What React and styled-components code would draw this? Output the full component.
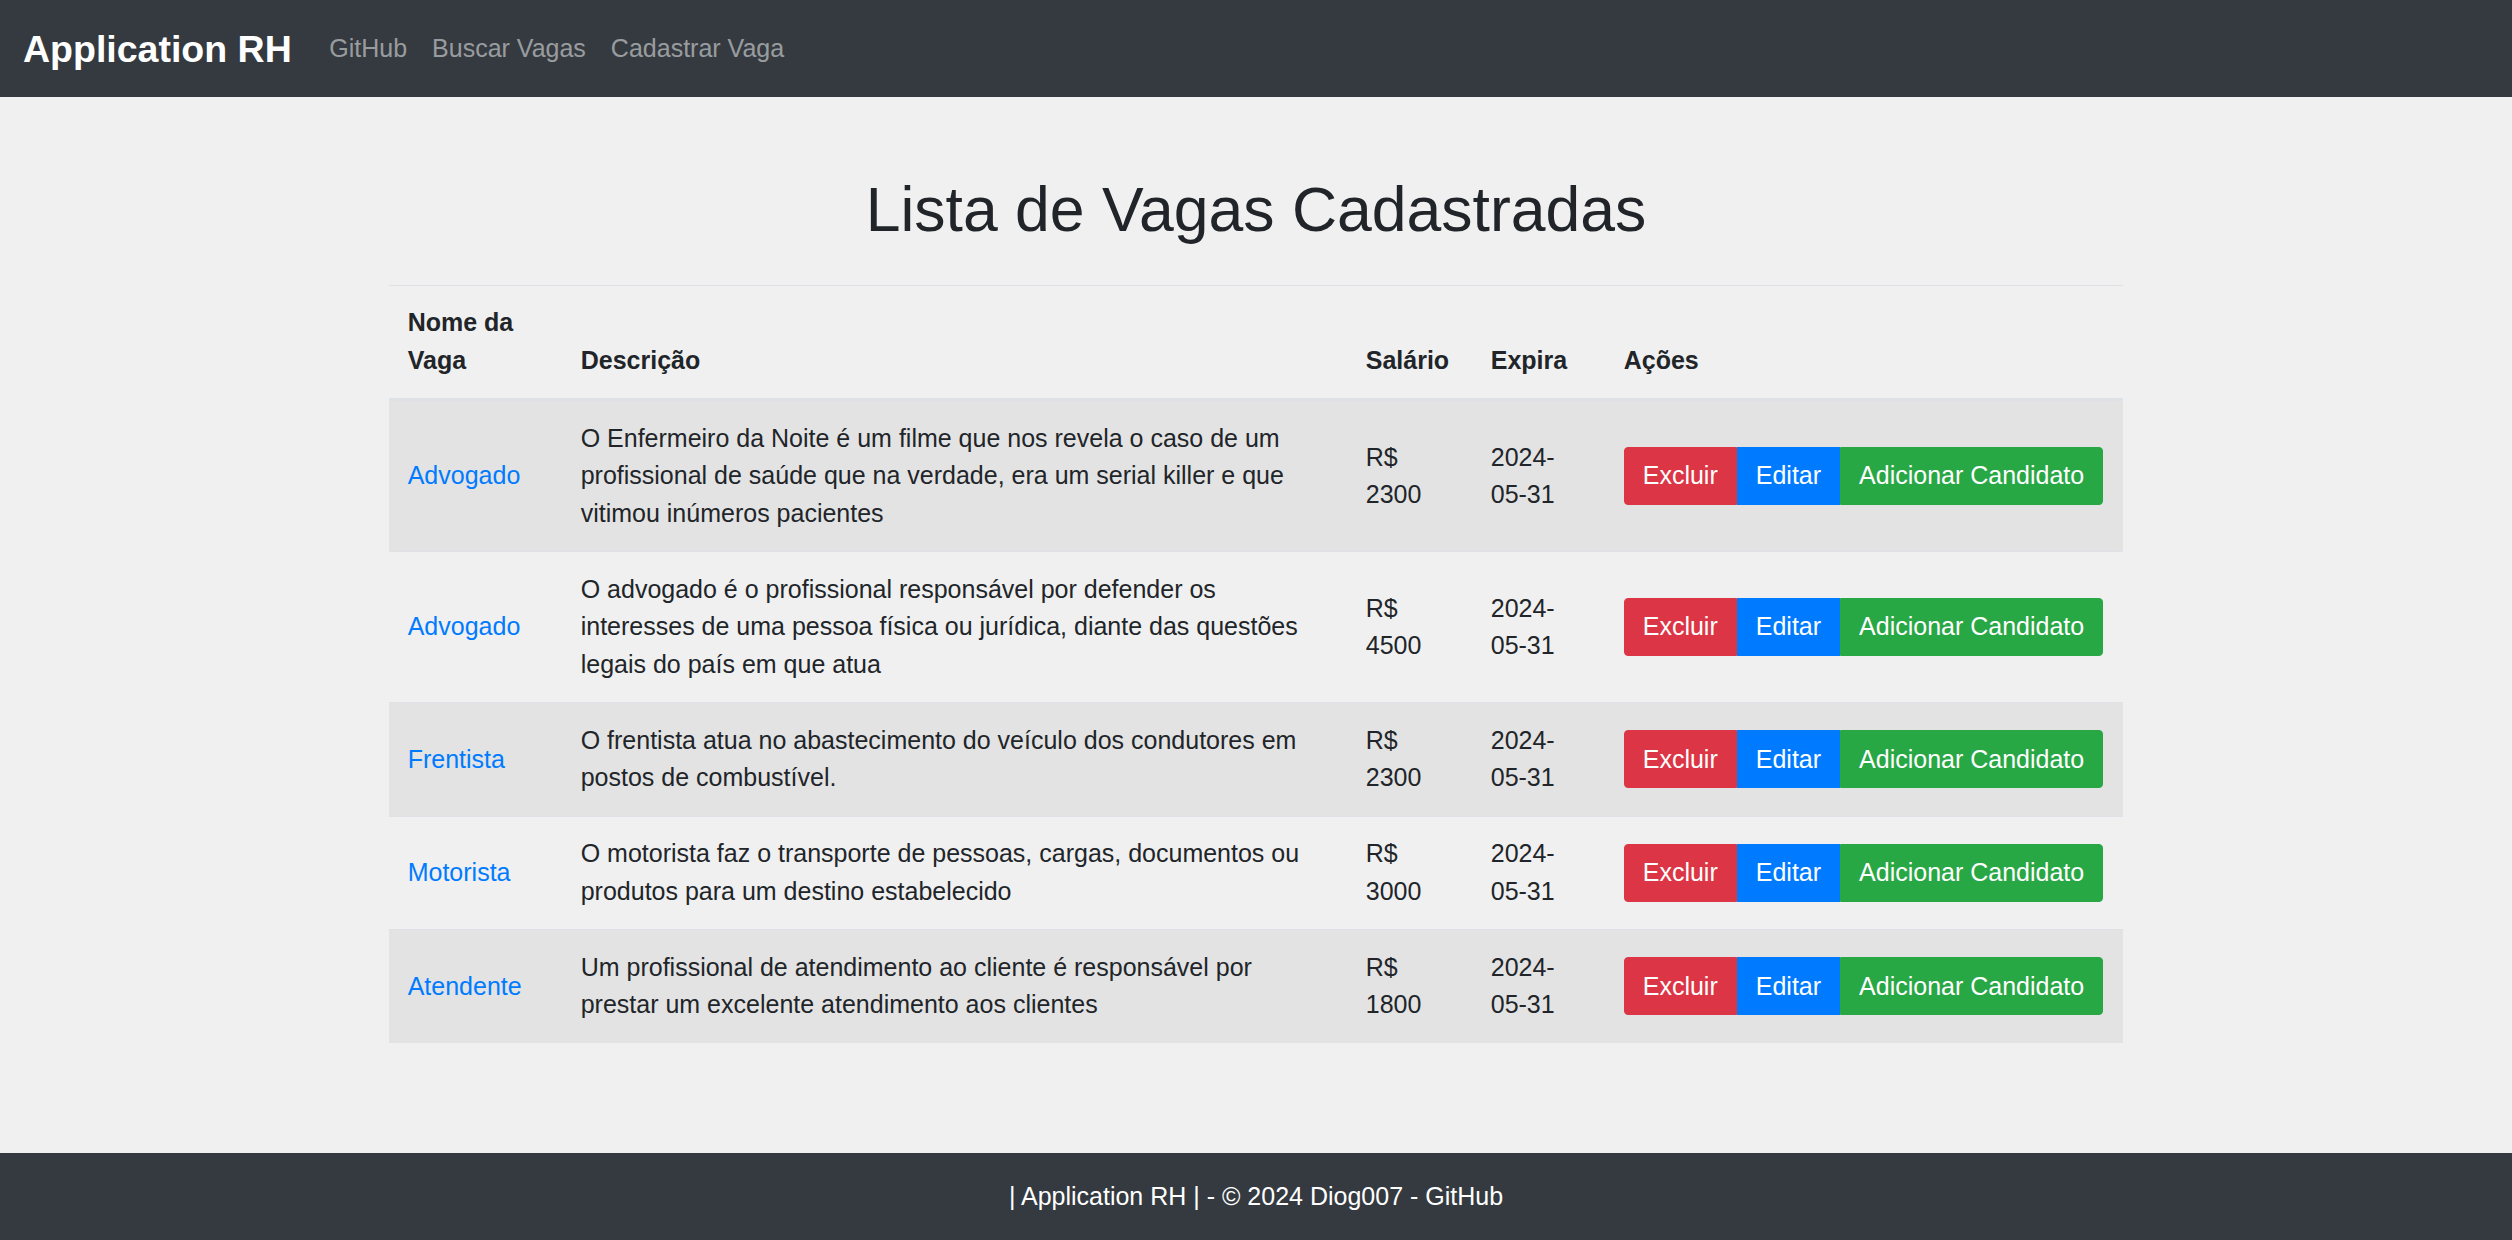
import React from "react";
import styled, { createGlobalStyle } from "styled-components";

const vagas = [
  {
    nome: "Advogado",
    descricao:
      "O Enfermeiro da Noite é um filme que nos revela o caso de um profissional de saúde que na verdade, era um serial killer e que vitimou inúmeros pacientes",
    salario: "2300",
    expira: "2024-05-31",
  },
  {
    nome: "Advogado",
    descricao:
      "O advogado é o profissional responsável por defender os interesses de uma pessoa física ou jurídica, diante das questões legais do país em que atua",
    salario: "4500",
    expira: "2024-05-31",
  },
  {
    nome: "Frentista",
    descricao: "O frentista atua no abastecimento do veículo dos condutores em postos de combustível.",
    salario: "2300",
    expira: "2024-05-31",
  },
  {
    nome: "Motorista",
    descricao: "O motorista faz o transporte de pessoas, cargas, documentos ou produtos para um destino estabelecido",
    salario: "3000",
    expira: "2024-05-31",
  },
  {
    nome: "Atendente",
    descricao: "Um profissional de atendimento ao cliente é responsável por prestar um excelente atendimento aos clientes",
    salario: "1800",
    expira: "2024-05-31",
  },
];

export default function App() {
  return (
    <>
      <GlobalStyle />
      <Page>
        <Navbar>
          <Brand href="#">Application RH</Brand>
          <NavLinks>
            <NavLink href="#">GitHub</NavLink>
            <NavLink href="#">Buscar Vagas</NavLink>
            <NavLink href="#">Cadastrar Vaga</NavLink>
          </NavLinks>
        </Navbar>

        <Main>
          <Container>
            <Title>Lista de Vagas Cadastradas</Title>
            <Table>
              <colgroup>
                <col style={{ width: 173 }} />
                <col style={{ width: 785 }} />
                <col style={{ width: 125 }} />
                <col style={{ width: 133 }} />
                <col style={{ width: 518 }} />
              </colgroup>
              <thead>
                <tr>
                  <Th>Nome da Vaga</Th>
                  <Th>Descrição</Th>
                  <Th>Salário</Th>
                  <Th>Expira</Th>
                  <Th>Ações</Th>
                </tr>
              </thead>
              <tbody>
                {vagas.map((v, i) => (
                  <Row key={i} $striped={i % 2 === 0}>
                    <Td>
                      <VagaLink href="#">{v.nome}</VagaLink>
                    </Td>
                    <Td>{v.descricao}</Td>
                    <Td>R$ {v.salario}</Td>
                    <Td>{v.expira}</Td>
                    <Td>
                      <BtnGroup>
                        <Btn $color="#dc3545">Excluir</Btn>
                        <Btn $color="#007bff">Editar</Btn>
                        <Btn $color="#28a745">Adicionar Candidato</Btn>
                      </BtnGroup>
                    </Td>
                  </Row>
                ))}
              </tbody>
            </Table>
          </Container>
        </Main>

        <Footer>
          | Application RH | - © 2024 Diog007 - <FooterLink href="#">GitHub</FooterLink>
        </Footer>
      </Page>
    </>
  );
}

// ==================================== STYLES ===============================

const GlobalStyle = createGlobalStyle`
  * { box-sizing: border-box; }
  body {
    margin: 0;
    background: #f0f0f0;
    color: #212529;
    font-family: "Liberation Sans", Arial, sans-serif;
    font-size: 25px;
    line-height: 37.5px;
  }
`;

const Page = styled.div`
  display: flex;
  flex-direction: column;
  min-height: 100vh;
`;

const Navbar = styled.nav`
  display: flex;
  align-items: center;
  height: 97px;
  padding: 0 25px 0 23px;
  background: #343a40;
`;

const Brand = styled.a`
  margin-right: 25px;
  color: #fff;
  font-size: 37.5px;
  font-weight: 700;
  line-height: 56px;
  text-decoration: none;
`;

const NavLinks = styled.div`
  display: flex;
`;

const NavLink = styled.a`
  padding: 0 12.5px;
  color: rgba(255, 255, 255, 0.5);
  text-decoration: none;
`;

const Main = styled.main`
  flex: 1;
`;

const Container = styled.div`
  width: 1781px;
  margin: 75px auto 0;
  padding: 0 23.4375px;
`;

const Title = styled.h1`
  margin: 0 0 37.5px;
  font-size: 62.5px;
  font-weight: 500;
  line-height: 75px;
  text-align: center;
`;

const Table = styled.table`
  width: 100%;
  border-collapse: collapse;
  table-layout: fixed;
`;

const Th = styled.th`
  padding: 18.75px;
  border-top: 1px solid #dee2e6;
  border-bottom: 3px solid #dee2e6;
  text-align: left;
  vertical-align: bottom;
  font-weight: 700;
`;

const Row = styled.tr`
  background: ${(p) => (p.$striped ? "rgba(0, 0, 0, 0.05)" : "transparent")};
`;

const Td = styled.td`
  padding: 18.75px;
  border-top: 1px solid #dee2e6;
  vertical-align: middle;
`;

const VagaLink = styled.a`
  color: #007bff;
  text-decoration: none;
`;

const BtnGroup = styled.div`
  display: inline-flex;

  & > button:first-child {
    border-radius: 4px 0 0 4px;
  }
  & > button:last-child {
    border-radius: 0 4px 4px 0;
  }
`;

const Btn = styled.button`
  padding: 9.375px 18px;
  border: 1px solid ${(p) => p.$color};
  border-radius: 0;
  background: ${(p) => p.$color};
  color: #fff;
  font-family: inherit;
  font-size: 25px;
  line-height: 37.5px;
  white-space: nowrap;
  cursor: pointer;
`;

const Footer = styled.footer`
  padding: 25px;
  background: #343a40;
  color: #fff;
  text-align: center;
`;

const FooterLink = styled.a`
  color: #fff;
  text-decoration: none;
`;
